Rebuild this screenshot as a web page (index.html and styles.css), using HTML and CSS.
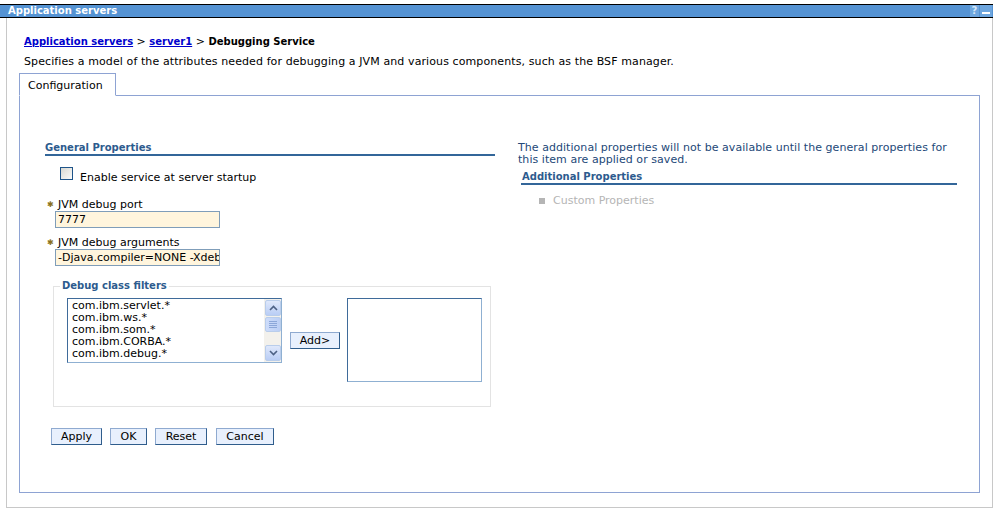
FILE: index.html
```html
<!DOCTYPE html>
<html lang="en">
<head>
  <meta charset="UTF-8">
  <title>Application servers - Debugging Service</title>
  <link rel="stylesheet" href="styles.css">
</head>
<body>
  <div class="titlebar">
    <span class="title">Application servers</span>
    <span class="tb-icons"><span class="tb-help">?</span><span class="tb-min"></span></span>
  </div>

  <div class="frame">
    <div class="crumbs"><a href="#">Application servers</a> &gt; <a href="#">server1</a> &gt; <b>Debugging Service</b></div>
    <p class="desc">Specifies a model of the attributes needed for debugging a JVM and various components, such as the BSF manager.</p>

    <div class="tabs"><span class="tab">Configuration</span></div>
    <div class="panel">
      <div class="col-left">
        <h3 class="section">General Properties</h3>

        <label class="check"><span class="box"></span><span>Enable service at server startup</span></label>

        <div class="field">
          <div class="flabel"><span class="req">&#x2731;</span>JVM debug port</div>
          <div class="input">7777</div>
        </div>
        <div class="field">
          <div class="flabel"><span class="req">&#x2731;</span>JVM debug arguments</div>
          <div class="input">-Djava.compiler=NONE -Xdeb</div>
        </div>

        <fieldset class="filters">
          <legend>Debug class filters</legend>
          <div class="filter-row">
            <div class="listbox">
              <ul class="items">
                <li>com.ibm.servlet.*</li>
                <li>com.ibm.ws.*</li>
                <li>com.ibm.som.*</li>
                <li>com.ibm.CORBA.*</li>
                <li>com.ibm.debug.*</li>
              </ul>
              <div class="scroll">
                <span class="sb-btn"><svg width="9" height="6" viewBox="0 0 9 6"><path d="M1 5 L4.5 1.5 L8 5" fill="none" stroke="#4d6185" stroke-width="1.6"/></svg></span>
                <span class="sb-thumb"><i></i><i></i><i></i><i></i></span>
                <span class="sb-track"></span>
                <span class="sb-btn"><svg width="9" height="6" viewBox="0 0 9 6"><path d="M1 1 L4.5 4.5 L8 1" fill="none" stroke="#4d6185" stroke-width="1.6"/></svg></span>
              </div>
            </div>
            <button class="btn add">Add&gt;</button>
            <div class="listbox empty"></div>
          </div>
        </fieldset>

        <div class="actions">
          <button class="btn apply">Apply</button>
          <button class="btn ok">OK</button>
          <button class="btn reset">Reset</button>
          <button class="btn cancel">Cancel</button>
        </div>
      </div>

      <div class="col-right">
        <p class="note">The additional properties will not be available until the general properties for this item are applied or saved.</p>
        <h3 class="section extra">Additional Properties</h3>
        <ul class="links">
          <li><span class="sq"></span>Custom Properties</li>
        </ul>
      </div>
    </div>
  </div>
</body>
</html>
```

FILE: styles.css
```css
* {margin:0; padding:0; box-sizing:border-box}
body {padding-top:4px; background:#fff; font:11px/13px "DejaVu Sans", Verdana, sans-serif; color:#000}
ul,li {list-style:none}
a {color:#0000cc}
b, a {font-weight:bold; font-size:10px}

/* title bar */
.titlebar {display:flex; align-items:center; justify-content:space-between; margin-right:8px; height:14px; background:#5593d3; border-top:1px solid #000; border-bottom:1px solid #000}
.titlebar .title {padding-left:8px; color:#fff; font-weight:bold; font-size:10px; line-height:12px}
.tb-icons {display:flex; height:12px; margin-right:1px}
.tb-help {width:9px; height:12px; margin-right:1px; background:#6ea6de; color:#d6e6f7; font-weight:bold; font-size:10px; line-height:12px; text-align:center}
.tb-min {position:relative; width:12px; height:12px; background:#6ea6de}
.tb-min:after {content:""; position:absolute; left:2px; right:2px; bottom:3px; height:2px; background:#fff}

/* outer frame */
.frame {margin:0 8px 0 6px; height:490px; padding-top:17px; border:1px solid #c8c8c8; border-top:0}
.crumbs {margin-left:17px}
.desc {margin:7px 0 0 17px; letter-spacing:0.1px}

.tabs {margin:5px 0 0 12px; display:flex}
.tab {position:relative; width:97px; height:23px; margin-bottom:-1px; padding:5px 0 0 8px; border:1px solid #8ea3d3; border-bottom:1px solid #fff; background:#fff}
.panel {display:grid; grid-template-columns:450px 439px; column-gap:23px; margin:0 12px; height:398px; padding:46px 0 0 25px; border:1px solid #8ea3d3}

.section {font-size:10px; line-height:12px; font-weight:bold; color:#2d5b8e; border-bottom:2px solid #336699}

/* left column */
.check {display:flex; margin:11px 0 0 15px}
.check .box {width:13px; height:13px; margin-right:7px; border:1px solid #1f5489; background:linear-gradient(135deg, #d8d8d2, #fbfbfa)}
.check span + span {padding-top:4px}

.field .flabel {display:flex; align-items:center; margin-top:15px; line-height:12px}
.field + .field .flabel {margin-top:9px}
.req {width:13px; padding-left:2px; color:#8a7120; font-size:8px}
.input {width:165px; height:17px; margin-left:10px; padding:1px 0 0 2px; overflow:hidden; white-space:nowrap; background:#fff5dd; border:1px solid #7f9db9; line-height:14px}

.filters {width:438px; height:127px; margin:14px 0 0 8px; border:1px solid #e3e3e3}
.filters legend {margin-left:6px; padding:0 2px; font-size:10px; font-weight:bold; color:#2d5b8e; line-height:12px}
.filter-row {display:flex; align-items:flex-start; padding:6px 0 0 13px}
.listbox {display:flex; width:215px; height:65px; border:1px solid #3f6b9a; border-right-color:#8fb0d2; border-bottom-color:#8fb0d2; background:#fff}
.listbox .items {flex:1; padding:1px 0 0 4px; line-height:12px}
.listbox.empty {width:135px; height:84px; margin-left:7px}

.scroll {display:flex; flex-direction:column; width:17px; background:#f3f1ec}
.sb-btn {display:flex; align-items:center; justify-content:center; width:16px; height:16px; margin:1px 0 0 1px; border:1px solid #b9cdeb; border-radius:2px; background:linear-gradient(#dfe8fb, #b9cdf5)}
.sb-btn:last-child {margin-bottom:1px}
.sb-thumb {display:flex; flex-direction:column; justify-content:center; align-items:center; gap:1px; width:16px; height:15px; margin:1px 0 0 1px; border:1px solid #b9cdeb; border-radius:2px; background:linear-gradient(90deg, #cddcfa, #bccff5)}
.sb-thumb i {display:block; width:8px; height:1px; background:#eef3fd; border-bottom:1px solid #8ca7d9}
.sb-track {flex:1}

.btn {height:17px; padding:0; font:11px/13px "DejaVu Sans", Verdana, sans-serif; color:#000; background:#e8f0fd; border:1px solid #8faad0; border-right-color:#2f5d8c; border-bottom-color:#2f5d8c}
.btn.add {margin:34px 0 0 8px; width:50px}
.btn.apply {width:51px}
.btn.ok {width:37px}
.btn.reset {width:52px}
.btn.cancel {width:58px; margin-left:1px}

.actions {display:flex; gap:8px; margin:21px 0 0 6px}

/* right column */
.note {color:#234878; line-height:12px; width:436px; letter-spacing:0.05px}
.section.extra {margin:5px 0 0 3px; padding-left:1px}
.links {margin-top:10px; padding-left:21px; color:#b5b5b5; line-height:12px}
.links li {display:flex; align-items:center}
.links .sq {width:6px; height:6px; margin-right:8px; background:#b5b5b5}
```
